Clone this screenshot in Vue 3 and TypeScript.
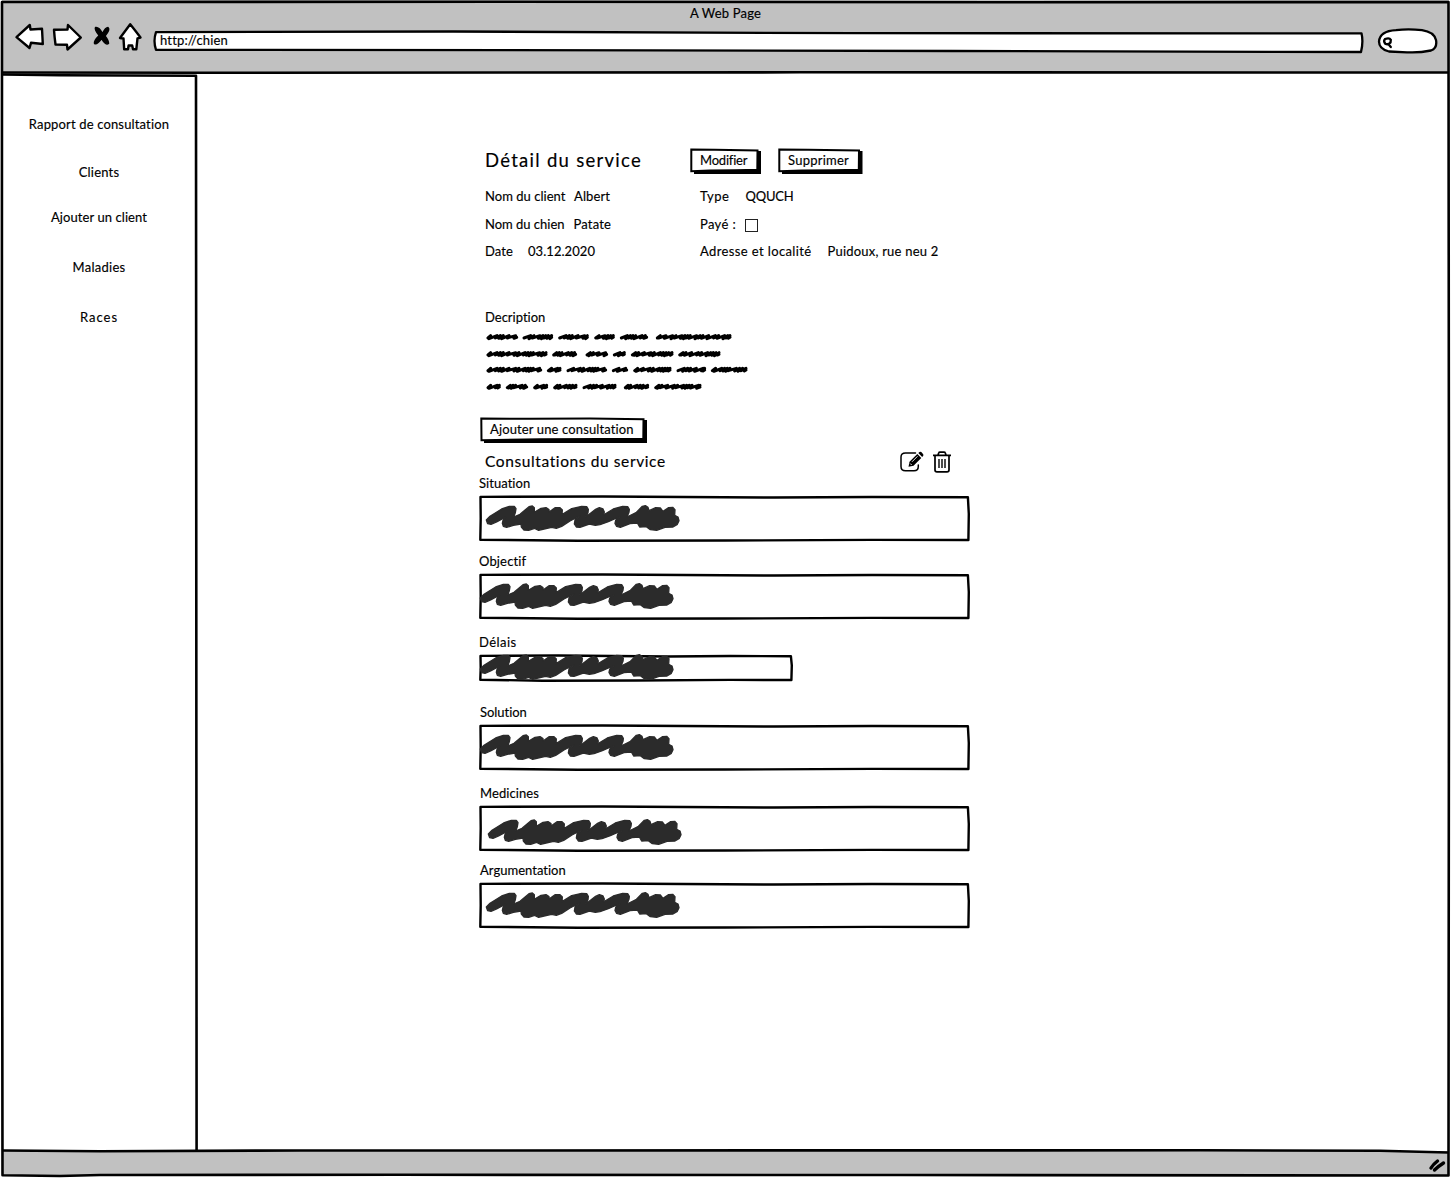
<script setup lang="ts">
interface Field {
  label: string
  labelWidth: number
  gap: number
  indent: number
  width: number
  height: number
  inkX: number
  inkY: number
}

// Stretches a label to its drawn width by spreading letter spacing.
const vFit = {
  mounted(el: HTMLElement, binding: { value: number }) {
    const count = (el.textContent ?? '').length
    const natural = el.getBoundingClientRect().width
    el.style.letterSpacing = `${(binding.value - natural) / count}px`
  },
}

const menu = [
  { label: 'Rapport de consultation', width: 140.5, gap: 42 },
  { label: 'Clients', width: 40.5, gap: 32 },
  { label: 'Ajouter un client', width: 96, gap: 29 },
  { label: 'Maladies', width: 53, gap: 34 },
  { label: 'Races', width: 38, gap: 34 },
]

const fields: Field[] = [
  { label: 'Situation', labelWidth: 51.5, gap: 0, indent: -1, width: 490, height: 45, inkX: 5, inkY: 9 },
  { label: 'Objectif', labelWidth: 47.5, gap: 12, indent: -1, width: 490, height: 45, inkX: -1, inkY: 9 },
  { label: 'Délais', labelWidth: 37.5, gap: 15, indent: -1, width: 313, height: 26, inkX: -1, inkY: -1 },
  { label: 'Solution', labelWidth: 47, gap: 23, indent: 0, width: 490, height: 45, inkX: -1, inkY: 9 },
  { label: 'Medicines', labelWidth: 59, gap: 15, indent: 0, width: 490, height: 45, inkX: 7, inkY: 13 },
  { label: 'Argumentation', labelWidth: 86, gap: 11, indent: 0, width: 490, height: 45, inkX: 5, inkY: 9 },
]

function framePath(w: number, h: number): string {
  return (
    `M0.500 0.900 L${w * 0.25} 0.500 L${w * 0.6} 1.500 L${w * 0.8} 1 L${w - 2.1} 1.200` +
    ` L${w - 1.2} ${h * 0.4} L${w - 1.6} ${h - 1} L${w * 0.8} ${h - 1.1} L${w * 0.5} ${h - 0.5}` +
    ` L${w * 0.2} ${h - 0.3} L0.300 ${h - 1.3} L0.700 ${h * 0.5} Z`
  )
}

const lines = [
  { y: 96, words: [[35, 130], [143, 235], [250, 342], [358, 420], [435, 520], [543, 770]] },
  { y: 147, words: [[35, 218], [232, 307], [332, 400], [414, 453], [468, 596], [610, 737]] },
  { y: 194, words: [[35, 202], [216, 260], [275, 397], [411, 460], [475, 590], [605, 694], [708, 818]] },
  { y: 245, words: [[35, 78], [93, 160], [175, 220], [235, 308], [323, 425], [447, 523], [538, 680]] },
]
const steps = [20, 10, 18, 9, 8, 8, 19, 10, 9, 17]

function wordPath(y: number, from: number, to: number): string {
  let x = from + 4
  let i = Math.round(from / 7)
  let d = `M${x} ${y + 3}`
  const end = to - 5
  while (x < end - 4) {
    const top = Math.min(x + steps[i % steps.length], end)
    d += ` L${top} ${y - 4}`
    x = top
    d += ` L${top - 5} ${y + 3 + (i % 3)}`
    i++
  }
  return d + ` L${end} ${y + 1}`
}

const ink =
  'M49 330 L60 319 L95 297 L118 289 L133 289 L138 296 L136 308 L131 321 L150 313 L177 290 L187 288 L193 293 L193 307 ' +
  'L213 295 L228 293 L237 299 L237 306 L256 293 L270 293 L277 300 L276 314 L305 296 L335 289 L350 290 L355 298 ' +
  'L354 308 L347 321 L375 299 L388 293 L399 297 L403 306 L400 315 L430 297 L458 289 L473 290 L478 298 L477 307 ' +
  'L471 321 L498 308 L517 289 L526 287 L534 292 L537 302 L557 293 L571 294 L579 304 L596 293 L608 292 L615 299 ' +
  'L614 316 L624 321 L627 332 L622 343 L609 351 L585 352 L560 361 L541 359 L529 350 L509 351 L502 339 L480 341 ' +
  'L451 352 L440 349 L435 340 L437 331 L449 320 L415 335 L390 344 L376 346 L358 342 L330 352 L319 351 L313 342 ' +
  'L315 330 L329 318 L300 333 L275 349 L259 355 L245 352 L222 357 L206 361 L194 355 L176 361 L162 360 L154 351 ' +
  'L153 342 L130 346 L110 352 L100 349 L97 340 L99 331 L109 320 L80 336 L63 343 L53 341 Z'
</script>

<template>
  <div class="window">
    <header class="chrome">
      <div class="title"><span v-fit="71">A Web Page</span></div>
      <div class="toolbar">
        <svg class="nav" viewBox="0 0 144 34" width="144" height="34">
          <g fill="#fff" stroke="#000" stroke-width="2.4" stroke-linejoin="round">
            <path d="M2.500 17.200 L15.800 5 L16.500 9.500 L28 8.800 L28.800 24 L17 22.800 L15.500 28 Z" />
            <path d="M40 9.800 L53.500 9.500 L54 5 L66.800 17.500 L53.500 29.500 L53 24.800 L41.500 24.500 Q40.500 17 40 9.800 Z" />
            <path d="M116.200 4.300 Q120 9 126.500 17.500 L123.500 18.300 L122.300 29.300 L119 29.300 L118.200 25.500 L114.600 25.500 L114 29.300 L110.200 29.300 L109.500 18.500 L106 18 Z" />
          </g>
          <g stroke="#000" stroke-linejoin="round" fill="#000" stroke-width="1.500">
            <path d="M81.500 7.500 Q85 6.800 88.500 13.500 Q91.500 7.500 94 7.500 Q96.500 9.500 91 16 Q94.500 20.500 94.500 23.500 Q91.500 25.500 87.500 18.500 Q83.500 24.500 80.500 23.500 Q80 20.500 85.200 15.500 Q80.500 9.500 81.500 7.500 Z" />
          </g>
        </svg>
        <div class="address">
          <svg class="outline" width="1213" height="24" viewBox="0 0 1213 24">
            <path d="M3 2.200 L300 1.500 L700 3.200 L1208.500 3.300 Q1210.500 12 1208 22 L800 21 L500 20.300 L3 19.800 Q0 11 3 2.200 Z" fill="#fff" stroke="#000" stroke-width="2.300" stroke-linejoin="round" />
          </svg>
          <span v-fit="67.500">http://chien</span>
        </div>
        <svg class="search" width="62" height="28" viewBox="0 0 62 28">
          <path d="M3 14.500 Q4 4 20 3.200 Q32 1.500 46 3.200 Q58 5 60 13 Q61.500 21 55 23.500 Q43 26 31 25.300 L13 24.500 Q3 22 3 14.500 Z" fill="#fff" stroke="#000" stroke-width="2.300" />
          <path d="M14.500 15.500 Q12.500 18 9.500 17 Q7 14 9 12 Q13.500 10.400 14.800 12.800 Z M12.500 17.300 L14.800 20" fill="none" stroke="#000" stroke-width="2.300" stroke-linecap="round" />
        </svg>
      </div>
    </header>

    <div class="body">
      <nav class="sidebar">
        <a v-for="item in menu" :key="item.label" :style="{ marginTop: item.gap + 'px' }">
          <span v-fit="item.width">{{ item.label }}</span>
        </a>
      </nav>

      <main class="content">
        <div class="heading">
          <h1><span v-fit="157">Détail du service</span></h1>
          <button class="btn modify">
            <svg class="outline" width="73" height="27" viewBox="0 0 73 27">
              <path d="M4 3 H71 V26 H4 Z" fill="#000" />
              <path d="M1.300 1.600 L25 1.700 L67.500 2.400 L67.300 21.800 L45 22.200 L20 22.500 L1.300 23.200 Z" fill="#fff" stroke="#000" stroke-width="2" />
            </svg>
            <span v-fit="47">Modifier</span>
          </button>
          <button class="btn remove">
            <svg class="outline" width="87" height="27" viewBox="0 0 87 27">
              <path d="M4 3 H84.500 V26 H4 Z" fill="#000" />
              <path d="M1.300 1.600 L30 1.700 L81 2.400 L80.800 21.800 L55 22.200 L24 22.500 L1.300 23.200 Z" fill="#fff" stroke="#000" stroke-width="2" />
            </svg>
            <span v-fit="61">Supprimer</span>
          </button>
        </div>

        <div class="info">
          <p><span v-fit="80.500">Nom du client</span><b class="near"><i v-fit="36">Albert</i></b></p>
          <p><span v-fit="29.500">Type</span><b class="far"><i v-fit="48">QQUCH</i></b></p>
          <p><span v-fit="79.500">Nom du chien</span><b class="next"><i v-fit="37.500">Patate</i></b></p>
          <p><span v-fit="36">Payé :</span><span class="check"></span></p>
          <p class="last"><span v-fit="28">Date</span><b class="date"><i v-fit="67">03.12.2020</i></b></p>
          <p class="last"><span v-fit="111.500">Adresse et localité</span><b class="far"><i v-fit="111">Puidoux, rue neu 2</i></b></p>
        </div>

        <div class="caption"><span v-fit="60.500">Decription</span></div>
        <svg class="notes" width="275" height="70" viewBox="15 60 825 210">
          <g v-for="line in lines" :key="line.y" fill="none" stroke="#000" stroke-width="9" stroke-linecap="round" stroke-linejoin="round">
            <path v-for="w in line.words" :key="w[0]" :d="wordPath(line.y, w[0], w[1])" />
          </g>
        </svg>

        <button class="btn add">
          <svg class="outline" width="169" height="27" viewBox="0 0 169 27">
            <path d="M4 3 H167 V26 H4 Z" fill="#000" />
            <path d="M1.300 1.500 L50 1.800 L110 1.600 L163.500 2.300 L163.300 21.700 L120 22 L60 22.300 L1.500 23.200 Z" fill="#fff" stroke="#000" stroke-width="2" />
          </svg>
          <span v-fit="144">Ajouter une consultation</span>
        </button>

        <div class="subheading">
          <h2><span v-fit="181">Consultations du service</span></h2>
          <svg width="24" height="22" viewBox="0 0 24 22">
            <path d="M15.500 2 H5.500 Q1 2 1 6 V15.500 Q1 19.800 5.500 19.800 H14 Q18.300 19.800 18.300 15.500 V14" fill="none" stroke="#000" stroke-width="1.500" stroke-linecap="round" />
            <path d="M8.500 15.800 L9.500 10.800 L17.300 3 L21.300 7 L13.500 14.800 Z M18.300 2 L19.500 0.900 Q20.400 0.300 21.300 1.100 L23 2.900 Q23.900 3.900 23.200 4.700 L22.200 5.900 Z" fill="#000" />
            <path d="M12 10.800 L17.500 5.300 M10.200 12.500 L11.700 14" stroke="#fff" stroke-width="0.900" />
          </svg>
          <svg class="trash" width="20" height="22" viewBox="0 0 20 22">
            <path d="M1 4.300 H19 M3 4.500 V19 Q3 20.800 5 20.800 H15 Q17 20.800 17 19 V4.500 M6 4 L6.800 1.800 Q7 1.100 8 1.100 H12 Q13 1.100 13.200 1.800 L14 4" fill="none" stroke="#000" stroke-width="1.700" />
            <path d="M7 8 V17 M10 8 V17 M13 8 V17" stroke="#000" stroke-width="1.400" />
          </svg>
        </div>

        <section v-for="f in fields" :key="f.label" class="field" :style="{ marginTop: f.gap + 'px' }">
          <label :style="{ marginLeft: f.indent + 'px' }"><span v-fit="f.labelWidth">{{ f.label }}</span></label>
          <div class="box" :style="{ width: f.width + 'px', height: f.height + 'px' }">
            <svg class="outline" :width="f.width" :height="f.height">
              <path :d="framePath(f.width, f.height)" fill="#fff" stroke="#000" stroke-width="2.400" stroke-linejoin="round" />
            </svg>
            <svg class="ink" width="195" height="27" viewBox="45 285 585 81" :style="{ left: f.inkX + 'px', top: f.inkY + 'px' }">
              <path :d="ink" fill="#2b2b2b" stroke="#2b2b2b" stroke-width="4" stroke-linejoin="round" />
            </svg>
          </div>
        </section>
      </main>
    </div>

    <footer class="status">
      <svg width="18" height="16" viewBox="0 0 18 16">
        <path d="M3 11 Q5 7.500 9.500 4 M6.500 13 Q10 9.500 15.500 6" fill="none" stroke="#000" stroke-width="3.400" stroke-linecap="round" />
      </svg>
    </footer>

    <svg class="frame" width="1451" height="1178" viewBox="0 0 1451 1178">
      <g fill="none" stroke="#000" stroke-width="2.600" stroke-linejoin="round">
        <path d="M2 2 L500 1.800 L1000 2.300 L1448.500 2 L1449 600 L1448.500 1175.500 L900 1175 L400 1174.800 L100 1175 L60 1176 L2.500 1175.300 L1.800 600 Z" />
        <path d="M2 72.500 L200 72.800 L800 72.300 L1448 72.500" />
        <path d="M2 74.500 L60 75.200 L196 75.800 L196.300 600 L196.600 1151" />
        <path d="M2 1150.500 L100 1151.200 L300 1150.500 L1200 1150.300 L1380 1150.800 L1448 1152.500" />
      </g>
    </svg>
  </div>
</template>

<style>
body {
  margin: 0;
  background: #fff;
}
</style>

<style scoped>
.window {
  position: relative;
  display: flex;
  flex-direction: column;
  width: 1451px;
  height: 1178px;
  overflow: hidden;
  background: #fff;
  color: #000;
  font-family: Lato, "Open Sans", sans-serif;
  font-size: 13px;
  line-height: 16px;
  -webkit-text-stroke: 0.15px #000;
}
span,
i {
  display: inline-block;
  font-style: normal;
  white-space: nowrap;
}
.chrome {
  height: 73px;
  margin: 0 2px;
  background: #c1c1c1;
}
.title {
  padding-top: 5px;
  text-align: center;
}
.toolbar {
  display: flex;
  align-items: flex-start;
}
.nav {
  margin: -1px 0 0 12px;
}
.address {
  position: relative;
  width: 1211px;
  height: 24px;
  margin: 9px 0 0 -5px;
}
.address span {
  position: relative;
  margin: 2px 0 0 7px;
}
.outline {
  position: absolute;
  left: 0;
  top: 0;
  overflow: visible;
}
.search {
  margin: 6px 0 0 12px;
}
.body {
  display: flex;
  height: 1078px;
}
.sidebar {
  display: flex;
  flex-direction: column;
  align-items: center;
  width: 198px;
}
.sidebar a:first-child {
  padding-top: 1px;
}
.content {
  padding: 75px 0 0 282px;
}
.heading {
  display: flex;
  height: 27px;
}
h1,
h2 {
  margin: 0;
  font-weight: 400;
}
h1 {
  width: 205px;
  padding-left: 5px;
  font-size: 18.500px;
  line-height: 24px;
}
.btn {
  position: relative;
  display: block;
  height: 26px;
  padding: 0 0 2px 10px;
  border: 0;
  background: none;
  color: inherit;
  font: inherit;
  text-align: left;
}
.btn span {
  position: relative;
  display: block;
  width: max-content;
}
.modify {
  width: 88px;
}
.remove {
  width: 87px;
}
.info {
  display: grid;
  grid-template-columns: 215px auto;
  padding: 13px 0 0 5px;
  row-gap: 12px;
}
.info p {
  display: flex;
  margin: 0;
}
.info .last {
  margin-top: -1px;
}
.info b {
  font-weight: 400;
}
.near {
  margin-left: 8.500px;
}
.next {
  margin-left: 9px;
}
.far {
  margin-left: 16px;
}
.date {
  margin-left: 15px;
}
.check {
  box-sizing: border-box;
  width: 13px;
  height: 13px;
  margin: 3px 0 0 9px;
  border: 1px solid #222;
}
.caption {
  padding: 50px 0 0 5px;
}
.notes {
  display: block;
}
.add {
  width: 169px;
  margin-top: 22px;
}
.subheading {
  display: flex;
  align-items: flex-start;
  height: 26px;
  padding: 6px 0 0 5px;
}
h2 {
  width: 415px;
  font-size: 15.500px;
  line-height: 24px;
}
.subheading svg {
  margin-top: 2px;
}
.subheading .trash {
  margin-left: 8px;
}
.field label {
  display: block;
  height: 21px;
}
.box {
  position: relative;
}
.ink {
  position: absolute;
}
.status {
  display: flex;
  justify-content: flex-end;
  height: 25px;
  margin: 0 2px;
  padding-right: 3px;
  background: #c1c1c1;
}
.status svg {
  margin-top: 6px;
}
.frame {
  position: absolute;
  left: 0;
  top: 0;
  pointer-events: none;
}
</style>
